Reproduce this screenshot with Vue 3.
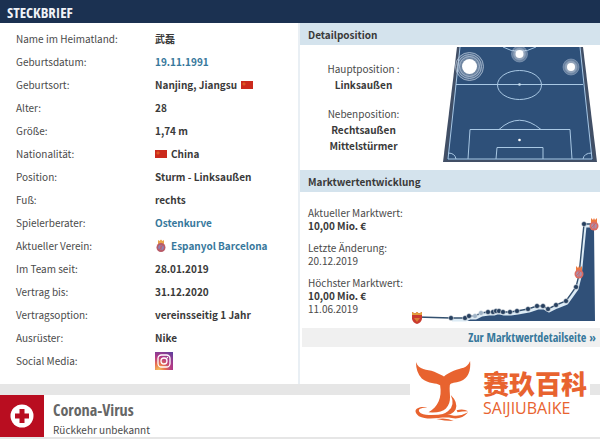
<script setup>
const facts = [
  { label: 'Name im Heimatland:', value: '武磊' },
  { label: 'Geburtsdatum:', value: '19.11.1991', link: true },
  { label: 'Geburtsort:', value: 'Nanjing, Jiangsu', icon: 'flag-after' },
  { label: 'Alter:', value: '28' },
  { label: 'Größe:', value: '1,74 m' },
  { label: 'Nationalität:', value: 'China', icon: 'flag' },
  { label: 'Position:', value: 'Sturm - Linksaußen' },
  { label: 'Fuß:', value: 'rechts' },
  { label: 'Spielerberater:', value: 'Ostenkurve', link: true },
  { label: 'Aktueller Verein:', value: 'Espanyol Barcelona', link: true, icon: 'club' },
  { label: 'Im Team seit:', value: '28.01.2019' },
  { label: 'Vertrag bis:', value: '31.12.2020' },
  { label: 'Vertragsoption:', value: 'vereinsseitig 1 Jahr' },
  { label: 'Ausrüster:', value: 'Nike' },
  { label: 'Social Media:', icon: 'instagram' },
]

const points = [
  [51, 108], [65, 108], [69, 106], [75, 106], [81, 103], [88, 102], [93, 102], [96, 101],
  [99, 101], [103, 102], [110, 102], [117, 101], [128, 99], [137, 96], [143, 96], [148, 99],
  [156, 95], [166, 91], [176, 77], [179, 65], [184, 14], [194, 14],
]
const faint = [3, 4]
const line = [[17, 107], ...points].map((p) => p.join(',')).join(' ')
const area = `60,111 ${points.slice(1).map(([x, y]) => `${x},${y + 2}`).join(' ')} 195,111`
const halo = points.map(([x, y]) => `${x + 1},${y + 2}`).join(' ')
</script>

<template>
  <div class="page">
    <section class="card">
      <h1 class="title">STECKBRIEF</h1>
      <div class="columns">
        <div class="facts">
          <table>
            <tbody>
              <tr v-for="f in facts" :key="f.label">
                <th scope="row">{{ f.label }}</th>
                <td>
                  <span class="value">
                    <span v-if="f.icon === 'flag'" class="flag"></span>
                    <svg v-if="f.icon === 'club'" class="club" viewBox="0 0 12 14">
                      <path d="M3 1l1.500 1L6 .5 7.500 2 9 1v4H3z" fill="#e9a34a" />
                      <circle cx="6" cy="8.500" r="4.500" fill="#b75a68" />
                      <circle cx="6" cy="8.500" r="2.800" fill="#8d83b4" />
                      <path d="M4 11l4-5M6 5v7" stroke="#cf5355" stroke-width=".8" />
                    </svg>
                    <a v-if="f.link" href="#">{{ f.value }}</a>
                    <template v-else-if="f.value">{{ f.value }}</template>
                    <span v-if="f.icon === 'flag-after'" class="flag"></span>
                    <a v-if="f.icon === 'instagram'" href="#" class="insta" aria-label="Instagram">
                      <svg viewBox="0 0 18 18">
                        <defs>
                          <radialGradient id="ig" cx=".2" cy="1" r="1.200">
                            <stop offset="0" stop-color="#f6c45c" />
                            <stop offset=".3" stop-color="#e8704f" />
                            <stop offset=".6" stop-color="#b53a86" />
                            <stop offset="1" stop-color="#643f9d" />
                          </radialGradient>
                        </defs>
                        <rect width="18" height="18" fill="url(#ig)" />
                        <rect x="3" y="3" width="12" height="12" rx="3.500" fill="none" stroke="#fff" stroke-width="1.300" />
                        <circle cx="9" cy="9" r="3" fill="none" stroke="#fff" stroke-width="1.300" />
                        <circle cx="12.400" cy="5.600" r=".8" fill="#fff" />
                      </svg>
                    </a>
                  </span>
                </td>
              </tr>
            </tbody>
          </table>
        </div>

        <div class="side">
          <h2 class="subtitle">Detailposition</h2>
          <div class="position">
            <div class="roles">
              <p>Hauptposition :<br /><b>Linksaußen</b></p>
              <p>Nebenposition:<br /><b>Rechtsaußen</b><br /><b>Mittelstürmer</b></p>
            </div>
            <svg class="pitch" viewBox="0 0 154 115">
              <path d="M14 0H140L154 115H0z" fill="#414f66" />
              <path d="M17 0H137L150 113H4z" fill="#2e5079" />
              <g fill="none" stroke="#a9c8e4" stroke-width="1">
                <path d="M17 0L5 112H149L137 0M13 37.500H140" />
                <ellipse cx="76.500" cy="38" rx="22" ry="14.500" />
                <path d="M60 0Q76 9 93 0" />
                <path d="M25 112L27 82.500H127L129 112M53 112L54 100.500H100L100 112" />
                <path d="M56 82.500Q76 64 98 82.500" />
                <path d="M5 106Q12 106 13 112M149 106Q141 106 140 112" />
              </g>
              <circle cx="76.500" cy="37.500" r="1.300" fill="#c9def0" />
              <circle cx="76.500" cy="93" r="1.300" fill="#fff" />
              <g fill="#fff" fill-opacity=".12" stroke="#b4c4d8" stroke-width=".8">
                <circle cx="26.500" cy="19.500" r="14" />
                <circle cx="26.500" cy="19.500" r="12" />
                <circle cx="26.500" cy="19.500" r="10" />
              </g>
              <circle cx="26.500" cy="19.500" r="7.500" fill="#fff" />
              <g fill="#fff" fill-opacity=".28" stroke="#8ba1bd" stroke-width=".6">
                <circle cx="76.500" cy="7" r="8" />
                <circle cx="76.500" cy="7" r="6" />
                <circle cx="128" cy="20" r="8" />
                <circle cx="128" cy="20" r="6" />
              </g>
              <circle cx="76.500" cy="7" r="4" fill="#fff" />
              <circle cx="128" cy="20" r="4" fill="#fff" />
            </svg>
          </div>

          <h2 class="subtitle">Marktwertentwicklung</h2>
          <div class="market">
            <div class="values">
              <p>Aktueller Marktwert:<br /><b>10,00 Mio. €</b></p>
              <p>Letzte Änderung:<br />20.12.2019</p>
              <p>Höchster Marktwert:<br /><b>10,00 Mio. €</b><br />11.06.2019</p>
            </div>
            <svg class="chart" viewBox="0 0 200 118">
              <polygon :points="area" fill="#305078" />
              <polyline :points="halo" fill="none" stroke="#dcebf5" stroke-width="3" stroke-linejoin="round" />
              <polyline :points="line" fill="none" stroke="#33506f" stroke-width="1.400" />
              <circle
                v-for="(p, i) in points"
                :key="i"
                :cx="p[0]"
                :cy="p[1]"
                r="2.500"
                :fill="faint.includes(i) ? '#9fb3c6' : '#263f5f'"
                stroke="#fff"
                stroke-width=".5"
              />
              <g>
                <path d="M12 102l3 1.500 2-1.500 2 1.500 3-1.500v7q-1 4-5 5-4-1-5-5z" fill="#c93a2e" />
                <path d="M12 102l3 1.500 2-1.500 2 1.500 3-1.500v3H12z" fill="#e2a03c" />
                <path d="M14 108h6l-3 4z" fill="#dc7d36" />
              </g>
              <g v-for="c in [[179, 64], [194, 16]]" :key="c[0]">
                <path :d="`M${c[0] - 3} ${c[1] - 8}l2 2 1-2 1 2 2-2v5h-6z`" fill="#ee7a3f" />
                <circle :cx="c[0]" :cy="c[1]" r="4.500" fill="#dd6c62" />
                <circle :cx="c[0]" :cy="c[1]" r="2.800" fill="#a98fae" />
                <path :d="`M${c[0] - 3} ${c[1] + 2}l5-5M${c[0]} ${c[1] - 3}v6`" stroke="#d4635d" stroke-width=".8" />
              </g>
            </svg>
          </div>
          <a href="#" class="more">Zur Marktwertdetailseite »</a>
        </div>
      </div>
    </section>

    <section class="card injury">
      <div class="badge">
        <svg viewBox="0 0 24 24">
          <circle cx="12" cy="12" r="11.500" fill="#fff" />
          <path d="M9.500 5h5v4.500H19v5h-4.500V19h-5v-4.500H5v-5h4.500z" fill="#b90d20" />
        </svg>
      </div>
      <div class="injury-text">
        <h2>Corona-Virus</h2>
        <p>Rückkehr unbekannt</p>
      </div>
    </section>

    <div class="brand">
      <svg viewBox="0 0 60 64">
        <g fill="#e8632f">
          <path d="M1 1C4 10 12 8 20 11Q27 14 30 16Q33 13 40 10C48 7 54 8 57 0C58 10 55 18 47 21C42 23 37 22 36 25C35 33 39 42 32 49Q27 54 14 53C24 47 28 38 26 25C22 22 14 24 7 18Q1 12 1 1z" />
          <path d="M37 35Q42 46 34 52Q29 56 20 56Q38 58 42 50Q45 43 37 35z" />
          <path d="M13 48C4 48 2 51 6 54C15 58 28 54 38 56Q46 58 55 53Q48 61 38 59C28 57 14 62 4 57C-4 51 3 46 13 48z" />
          <path d="M22 60Q33 58 40 62Q30 62 22 60zM43 51Q50 49 55 52Q48 52 44 53z" />
        </g>
      </svg>
      <div class="brand-text">
        <strong>赛玖百科</strong>
        <span>SAIJIUBAIKE</span>
      </div>
    </div>
  </div>
</template>

<style>
body {
  margin: 0;
  background: #e6e6e6;
}
</style>

<style scoped>
.page {
  position: relative;
  font: 10px/16px "Noto Sans CJK SC", "Open Sans", sans-serif;
  color: #4a4a4a;
  padding-bottom: 2px;
}
h1, h2, p {
  margin: 0;
}
b {
  color: #3a3a3a;
}
a {
  color: #37789c;
  text-decoration: none;
}
.card {
  background: #fff;
}
.title {
  height: 23px;
  padding-left: 7px;
  background: #1b3151;
  color: #f0f3f8;
  font: 300 15px/25px "Open Sans Condensed", "Open Sans", sans-serif;
}
.columns {
  display: grid;
  grid-template-columns: 149fr 151fr;
}
.facts {
  padding: 4px 0 12px 16px;
}
table {
  border-collapse: collapse;
  width: 100%;
}
th, td {
  height: 23px;
  padding: 0;
  text-align: left;
}
th {
  width: 139px;
  font-weight: 400;
}
td {
  font-weight: 700;
  color: #3a3a3a;
}
.value {
  display: flex;
  align-items: center;
  gap: 4px;
}
.flag {
  width: 12px;
  height: 8px;
  background: radial-gradient(circle at 3px 3px, #dd5a22 1px, #cb2a1d 2px);
}
.club {
  width: 12px;
  height: 14px;
}
.insta svg {
  display: block;
  width: 18px;
  height: 18px;
}
.side {
  border-left: 2px solid #e9eff4;
}
.subtitle {
  height: 22px;
  padding-left: 8px;
  background: #d4e3ed;
  color: #3a3a3a;
  font-size: 10px;
  line-height: 24px;
}
.position {
  display: flex;
  justify-content: space-between;
  padding: 2px 3px 8px 8px;
}
.roles {
  display: grid;
  flex: 1;
  align-content: start;
  gap: 13px;
  padding: 14px 24px 0 0;
  text-align: center;
}
.pitch {
  width: 154px;
  height: 115px;
}
.market {
  display: flex;
  justify-content: space-between;
  padding: 18px 0 0 8px;
}
.values {
  flex: 1;
  width: 0;
  line-height: 13px;
  white-space: nowrap;
}
.values p {
  margin-top: -4px;
  margin-bottom: 13px;
}
.chart {
  width: 200px;
  height: 118px;
  flex: none;
}
.more {
  display: block;
  margin-left: 2px;
  padding-right: 4px;
  background: #f0f0f0;
  text-align: right;
  font: 300 12px/19px "Open Sans Condensed", "Open Sans", sans-serif;
}
.injury {
  display: flex;
  margin-top: 11px;
}
.badge {
  display: flex;
  align-items: center;
  justify-content: center;
  width: 44px;
  background: #b90d20;
}
.badge svg {
  width: 24px;
  height: 24px;
}
.injury-text {
  padding: 4px 0 0 9px;
}
.injury-text h2 {
  color: #666;
  font: 300 16px/23px "Open Sans Condensed", "Open Sans", sans-serif;
}
.injury-text p {
  line-height: 15px;
}
.brand {
  position: absolute;
  right: 10px;
  bottom: 2px;
  display: flex;
  align-items: center;
  gap: 10px;
  box-sizing: border-box;
  height: 90px;
  padding: 0 3px 0 5px;
  background: #fff;
  color: #e8632f;
}
.brand svg {
  width: 58px;
  height: 64px;
}
.brand-text {
  display: grid;
}
.brand-text strong {
  font-size: 26px;
  line-height: 32px;
  font-weight: 900;
}
.brand-text span {
  font: 16px/18px "Open Sans", sans-serif;
}
</style>
